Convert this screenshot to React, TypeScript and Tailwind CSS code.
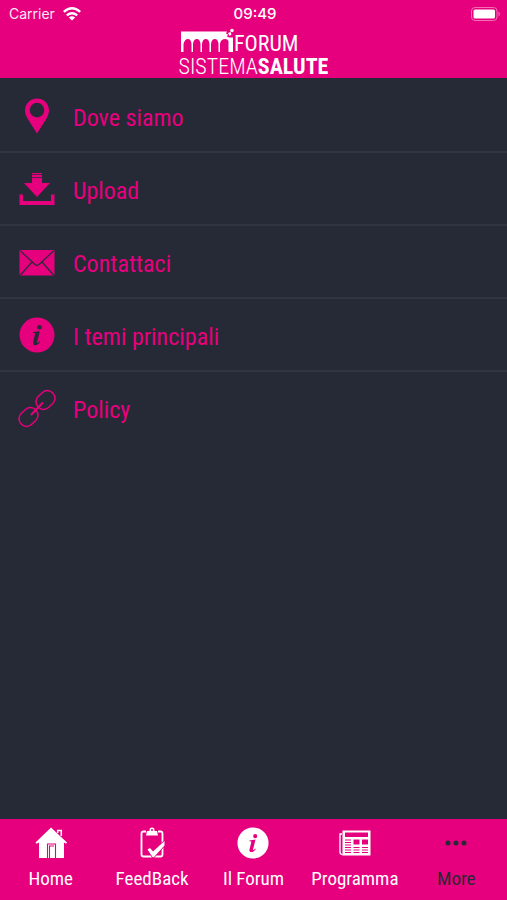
import React, { useState } from "react";

type IconProps = { className?: string };

const PinIcon = ({ className }: IconProps) => (
  <svg viewBox="0 0 36 36" className={className} fill="currentColor" aria-hidden="true">
    <path
      fillRule="evenodd"
      d="M18 .5C11.200 .5 6 5.700 6 12.300c0 3.400 1.400 6.200 2.900 8.900L18 35.500l9.100-14.300c1.500-2.700 2.900-5.500 2.900-8.900C30 5.700 24.800 .5 18 .5zm0 4.300a7.300 7.300 0 1 1 0 14.600 7.300 7.300 0 0 1 0-14.600z"
    />
  </svg>
);

const UploadIcon = ({ className }: IconProps) => (
  <svg viewBox="0 0 36 36" className={className} fill="currentColor" aria-hidden="true">
    <path d="M13 2h10v1.300H13zM13 4h10v2.300H13zM13 7h10v5h8L18 26 5 12h8z" />
    <path d="M.5 23.500h3.500V30h28v-6.500h3.500v10.500H.5z" />
  </svg>
);

const MailIcon = ({ className }: IconProps) => (
  <svg viewBox="0 0 36 36" className={className} aria-hidden="true">
    <rect x="0.5" y="6" width="35" height="25.500" rx="1.500" fill="currentColor" />
    <path
      d="M1.500 7L16 20.500q2 1.700 4 0L34.500 7M1.500 31L13 18M34.500 31L23 18"
      fill="none"
      stroke="#262a36"
      strokeWidth="1.200"
    />
  </svg>
);

const InfoIcon = ({ className }: IconProps) => (
  <svg viewBox="0 0 36 36" className={className} fill="currentColor" aria-hidden="true">
    <path
      fillRule="evenodd"
      d="M18 .5a17.500 17.500 0 1 1 0 35 17.500 17.500 0 0 1 0-35zM20.500 8a2.300 2.300 0 1 0 0 4.600 2.300 2.300 0 0 0 0-4.600zM20.800 14.200l-6.800.9-.2 1h1.200c1 0 1.200.5 1 1.400l-1.900 7.500c-.5 2 .3 3.200 2 3.200 2.200 0 3.800-1.500 5-3.500l-.8-.5c-.8 1.100-1.500 1.900-2 1.900-.4 0-.4-.4-.2-1.100z"
    />
  </svg>
);

const LinkIcon = ({ className }: IconProps) => (
  <svg
    viewBox="0 0 36 36"
    className={className}
    fill="none"
    stroke="currentColor"
    strokeWidth="1.500"
    strokeLinecap="round"
    overflow="visible"
    aria-hidden="true"
  >
    <rect x="-10" y="-7.500" width="20" height="15" rx="7" transform="translate(26.500 10) rotate(-43)" />
    <rect x="-10" y="-7.500" width="20" height="15" rx="7" transform="translate(9.500 27) rotate(-43)" />
    <path d="M12.500 24.500L23.500 13" strokeWidth="2" />
  </svg>
);

const HomeIcon = ({ className }: IconProps) => (
  <svg viewBox="0 0 32 32" className={className} aria-hidden="true">
    <path d="M16 .5L.5 15.500l1 1.200L4 15.500V31h25V15.500l2 1.200 1-1.200z" fill="currentColor" />
    <path d="M22.700 6V3.500h3.600V9" fill="none" stroke="currentColor" strokeWidth="1.500" />
    <path d="M12.500 31V17h8v14M14.500 31V19H19" fill="none" stroke="#e6007e" strokeWidth="1.100" />
  </svg>
);

const FeedbackIcon = ({ className }: IconProps) => (
  <svg viewBox="0 0 32 32" className={className} fill="none" stroke="currentColor" aria-hidden="true">
    <path d="M10 4.500H7.500Q5.500 4.500 5.500 6.500v21q0 2 2 2h17q2 0 2-2V6.500q0-2-2-2H22" strokeWidth="1.800" />
    <path
      d="M11 4h2.500V2.500Q13.500.5 16 .5t2.500 2V4H21l1 4.500H10z"
      fill="currentColor"
      stroke="none"
    />
    <circle cx="16" cy="3" r="1" fill="#e6007e" stroke="none" />
    <path
      d="M11.500 22.500l2.500-1.500 3 3.500L28.500 14v4.500L18 30h-1.500z"
      fill="currentColor"
      stroke="#e6007e"
      strokeWidth="1.500"
      paintOrder="stroke"
    />
  </svg>
);

const NewsIcon = ({ className }: IconProps) => (
  <svg viewBox="0 0 32 32" className={className} fill="none" stroke="currentColor" aria-hidden="true">
    <path d="M3 7H1v18q0 2.500 2.500 2.500" strokeWidth="1.300" />
    <path fillRule="evenodd" d="M3.500 3.500h28v25h-28zM6 5.500v4.500h23V5.500z" fill="currentColor" stroke="none" />
    {/* photos and text columns */}
    <path d="M14.500 12.500h6v5h-6zM23 12.500h6v5h-6z" fill="#e6007e" stroke="none" />
    <path
      d="M6 13h6M6 15.500h6M6 18h6M6 20.500h6M6 23h6M6 25.500h6M14.500 20.500h6M14.500 23h6M14.500 25.500h6M23 20.500h6M23 23h6M23 25.500h6"
      stroke="#e6007e"
    />
  </svg>
);

const DotsIcon = ({ className }: IconProps) => (
  <svg viewBox="0 0 32 32" className={className} fill="currentColor" aria-hidden="true">
    <circle cx="8" cy="16" r="2.500" />
    <circle cx="16" cy="16" r="2.500" />
    <circle cx="24" cy="16" r="2.500" />
  </svg>
);

const WifiIcon = ({ className }: IconProps) => (
  <svg viewBox="0 0 18 14" className={className} fill="none" stroke="white" strokeWidth="2.400" aria-hidden="true">
    <path d="M.8 4.800q8.200-7 16.400 0M3.800 8.300q5.200-4.300 10.400 0" />
    <path d="M9 13.500L5.800 10.500q3.200-2.300 6.400 0z" fill="white" stroke="none" />
  </svg>
);

const BatteryIcon = ({ className }: IconProps) => (
  <svg viewBox="0 0 30 14" className={className} aria-hidden="true">
    <rect x="0.5" y="0.5" width="25.500" height="13" rx="3.500" fill="none" stroke="#f56db5" />
    <rect x="2.500" y="2.500" width="21.500" height="9" rx="1.500" fill="white" />
    <path d="M27.500 4.500q3 2.500 0 5z" fill="#f56db5" />
  </svg>
);

// Aqueduct part of the logo
const ArchesIcon = ({ className }: IconProps) => (
  <svg viewBox="0 0 54 24" className={className} fill="currentColor" aria-hidden="true">
    <path d="M1 3.500h46l-1 2 2 1-1 2 2 1h4V24h-4.500V13q-1-2-3-2-5 0-5.500 5v8h-1.500v-8q-.5-5-3.700-5t-3.800 5v8h-1.500v-8q-.5-5-3.700-5t-3.800 5v8h-1.500v-8q-.5-5-3.700-5t-3.800 5v8h-1.500v-8q-.5-5-3.600-5T3.500 16v8H1z" />
    <circle cx="52" cy="2.500" r="1.800" />
    <path d="M48 5l2.500-1 1 2.500-2 1.500z" />
  </svg>
);

const menuItems = [
  { label: "Dove siamo", Icon: PinIcon },
  { label: "Upload", Icon: UploadIcon },
  { label: "Contattaci", Icon: MailIcon },
  { label: "I temi principali", Icon: InfoIcon },
  { label: "Policy", Icon: LinkIcon },
];

const tabs = [
  { label: "Home", Icon: HomeIcon },
  { label: "FeedBack", Icon: FeedbackIcon },
  { label: "Il Forum", Icon: InfoIcon },
  { label: "Programma", Icon: NewsIcon },
  { label: "More", Icon: DotsIcon },
];

const App = () => {
  const [activeTab, setActiveTab] = useState<string>("More");

  return (
    <div className="flex min-h-screen flex-col bg-[#262a36] font-['Roboto_Condensed','Liberation_Sans_Narrow',Roboto,sans-serif]">
      <header className="h-[78px] bg-[#e6007e] text-white">
        {/* Status bar */}
        <div className="grid h-7 grid-cols-3 items-center pl-[9px] pr-1.5 font-[Inter,sans-serif] text-sm">
          <div className="flex items-center gap-2 text-pink-100">
            <span>Carrier</span>
            <WifiIcon className="h-3.5 w-[18px]" />
          </div>
          <span className="text-center text-[15px] font-medium">09:49</span>
          <BatteryIcon className="h-3.5 w-[30px] justify-self-end" />
        </div>

        {/* Logo */}
        <h1 className="mx-auto w-[147px] text-[22px] leading-6">
          <span className="flex h-7 items-start">
            <ArchesIcon className="h-6 w-[54px]" />
            <span className="pt-1">FORUM</span>
          </span>
          <span className="flex h-[22px] items-center justify-center">
            <span className="font-light">SISTEMA</span>
            <span className="font-bold">SALUTE</span>
          </span>
        </h1>
      </header>

      <main className="flex-1 pt-0.5">
        <ul>
          {menuItems.map(({ label, Icon }) => (
            <li key={label} className="border-b-2 border-[#303541] last:border-b-0">
              <a href="#" className="flex h-[71px] items-center gap-[18px] px-[19px] text-2xl text-[#e6007e]">
                <Icon className="size-9" />
                <span className="pt-1">{label}</span>
              </a>
            </li>
          ))}
        </ul>
      </main>

      {/* Bottom navigation */}
      <nav className="grid h-[81px] grid-cols-5 bg-[#e6007e]">
        {tabs.map(({ label, Icon }) => (
          <button
            key={label}
            type="button"
            onClick={() => setActiveTab(label)}
            className={`flex flex-col items-center gap-1.5 pt-2 text-[19px] ${
              activeTab === label ? "text-[#262a36]" : "text-white"
            }`}
          >
            <Icon className="size-8" />
            <span className="leading-7">{label}</span>
          </button>
        ))}
      </nav>
    </div>
  );
};

export default App;
